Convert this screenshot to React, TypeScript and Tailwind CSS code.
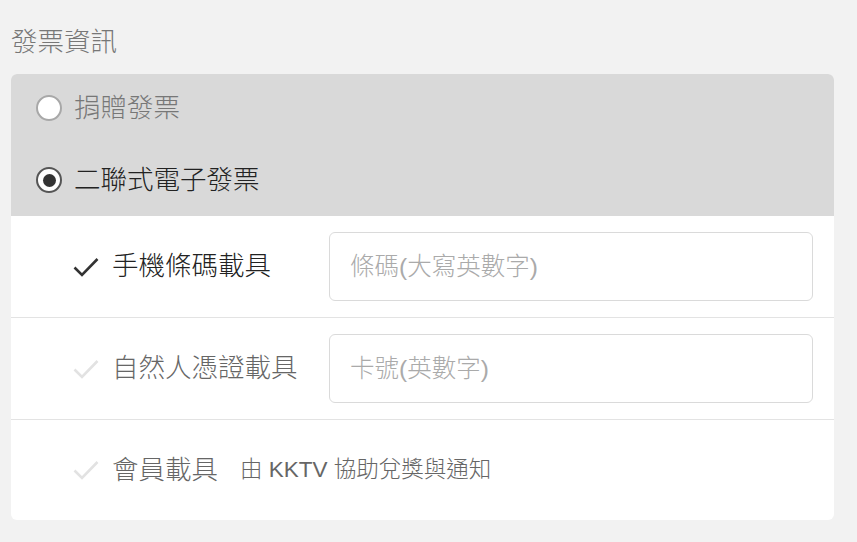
import { useState } from "react";

const FONT = "font-['Liberation_Sans','Noto_Sans_CJK_TC',sans-serif]";

type Carrier = { id: string; label: string; placeholder?: string; note?: string };

const carriers: Carrier[] = [
  { id: "mobile", label: "手機條碼載具", placeholder: "條碼(大寫英數字)" },
  { id: "cert", label: "自然人憑證載具", placeholder: "卡號(英數字)" },
  { id: "member", label: "會員載具", note: "由 KKTV 協助兌獎與通知" },
];

function Radio({ on }: { on: boolean }) {
  return (
    <span
      className={`flex h-[26px] w-[26px] shrink-0 items-center justify-center rounded-full bg-white border-2 ${
        on ? "border-[#555]" : "border-[#a8a8a8]"
      }`}
    >
      {on && <span className="h-[13px] w-[13px] rounded-full bg-[#333]" />}
    </span>
  );
}

function Check({ on }: { on: boolean }) {
  return (
    <svg width="26" height="20" viewBox="0 0 26 20" className="shrink-0">
      <polyline
        points="1.5,10.5 9,18 24.5,2"
        fill="none"
        stroke={on ? "#333" : "#e2e2e2"}
        strokeWidth="2.6"
      />
    </svg>
  );
}

export default function App() {
  const [type, setType] = useState<"donate" | "duplicate">("duplicate");
  const [carrier, setCarrier] = useState("mobile");

  return (
    <div className={`min-h-[542px] w-[857px] bg-[#f2f2f2] px-[11px] pt-[26px] font-light ${FONT}`}>
      <h2 className="mb-[16px] text-[26.5px] leading-[32px] text-[#777]">發票資訊</h2>

      <div className="overflow-hidden rounded-[6px] bg-white w-[823px]">
        {/* 發票類型 */}
        <div className="flex flex-col gap-[46px] bg-[#d9d9d9] pl-[25px] pt-[21px] pb-[23px]">
          <button onClick={() => setType("donate")} className="flex h-[26px] items-center gap-[12px]">
            <Radio on={type === "donate"} />
            <span className="text-[26.5px] leading-none text-[#777]">捐贈發票</span>
          </button>
          <button onClick={() => setType("duplicate")} className="flex h-[26px] items-center gap-[12px]">
            <Radio on={type === "duplicate"} />
            <span className="text-[26.5px] leading-none text-[#222]">二聯式電子發票</span>
          </button>
        </div>

        {/* 載具 */}
        {carriers.map((c, i) => (
          <div
            key={c.id}
            onClick={() => setCarrier(c.id)}
            className={`flex items-center pl-[62px] pr-[21px] ${
              i < carriers.length - 1 ? "h-[102px] border-b border-[#e3e3e3]" : "h-[100px]"
            }`}
          >
            <Check on={carrier === c.id} />
            <span
              className={`ml-[13px] text-[26.5px] leading-none ${
                carrier === c.id ? "text-[#222]" : "text-[#666]"
              } ${c.placeholder ? "w-[217px]" : ""}`}
            >
              {c.label}
            </span>
            {c.placeholder && (
              <input
                placeholder={c.placeholder}
                className="h-[69px] flex-1 rounded-[6px] border border-[#dadada] bg-white px-[20px] text-[24.5px] font-light text-[#333] outline-none placeholder:text-[#aaa]"
              />
            )}
            {c.note && <span className="ml-[22px] text-[22.5px] leading-none text-[#666]">{c.note}</span>}
          </div>
        ))}
      </div>
    </div>
  );
}
